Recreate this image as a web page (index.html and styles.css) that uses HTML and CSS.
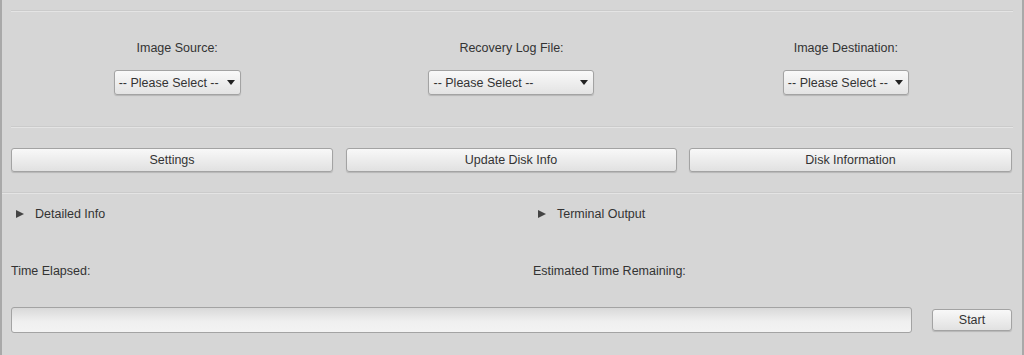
FILE: index.html
```html
<!DOCTYPE html>
<html>
<head>
<meta charset="utf-8">
<link rel="stylesheet" href="styles.css">
</head>
<body>
<div class="frame">
  <div class="rule inset"></div>
  <div class="selects">
    <div class="field">
      <div class="label">Image Source:</div>
      <div class="select w1"><span>-- Please Select --</span><i class="arrow"></i></div>
    </div>
    <div class="field">
      <div class="label">Recovery Log File:</div>
      <div class="select w2"><span>-- Please Select --</span><i class="arrow"></i></div>
    </div>
    <div class="field">
      <div class="label">Image Destination:</div>
      <div class="select w3"><span>-- Please Select --</span><i class="arrow"></i></div>
    </div>
  </div>
  <div class="rule inset r2"></div>
  <div class="buttons">
    <button class="btn">Settings</button>
    <button class="btn">Update Disk Info</button>
    <button class="btn">Disk Information</button>
  </div>
  <div class="rule full r3"></div>
  <div class="pair info">
    <div class="disclosure"><i class="tri"></i>Detailed Info</div>
    <div class="disclosure"><i class="tri"></i>Terminal Output</div>
  </div>
  <div class="pair times">
    <div class="text">Time Elapsed:</div>
    <div class="text">Estimated Time Remaining:</div>
  </div>
  <div class="progress-row">
    <div class="progress"></div>
    <button class="btn start">Start</button>
  </div>
</div>
</body>
</html>
```

FILE: styles.css
```css
html, body {
  margin: 0;
  padding: 0;
  background: #d6d6d6;
}
body {
  font-family: "Liberation Sans", Arial, sans-serif;
  font-size: 12.5px;
  color: #333;
}
.frame {
  box-sizing: border-box;
  width: 1024px;
  height: 355px;
  border-left: 2px solid #a9a9a9;
  border-right: 2px solid #a9a9a9;
  padding-top: 10px;
  overflow: hidden;
}
.rule {
  height: 0;
  border-top: 1px solid #cbcbcb;
  border-bottom: 1px solid #e4e4e4;
}
.rule.inset {
  margin: 0 9px 0 9px;
}
.rule.r2 {
  margin-top: 31px;
}
.rule.full {
  margin: 20px 0 0 0;
}
.selects {
  display: grid;
  grid-template-columns: 1fr 1fr 1fr;
  margin: 29px 9px 0 8px;
}
.field {
  display: flex;
  flex-direction: column;
  align-items: center;
}
.label {
  line-height: 15px;
  height: 15px;
}
.select {
  box-sizing: border-box;
  margin-top: 14px;
  height: 25px;
  display: flex;
  align-items: center;
  justify-content: space-between;
  padding: 0 5px 0 4px;
  border: 1px solid #a3a3a3;
  border-radius: 3px;
  background: linear-gradient(#f9f9f9, #e3e3e3);
  box-shadow: 0 1px 1px rgba(0,0,0,0.15);
  color: #333;
}
.select.w1 { width: 127px; }
.select.w2 { width: 166px; }
.select.w3 { width: 126px; }
.arrow {
  width: 0;
  height: 0;
  border-left: 4px solid transparent;
  border-right: 4px solid transparent;
  border-top: 5px solid #222;
}
.buttons {
  display: grid;
  grid-template-columns: 322px 331px 1fr;
  column-gap: 12.5px;
  margin: 20px 10px 0 9px;
}
.btn {
  box-sizing: border-box;
  height: 24px;
  font-family: "Liberation Sans", Arial, sans-serif;
  font-size: 12.5px;
  color: #333;
  border: 1px solid #a3a3a3;
  border-radius: 3px;
  background: linear-gradient(#f8f8f8, #e1e1e1);
  box-shadow: 0 1px 1px rgba(0,0,0,0.15);
  padding: 0;
}
.pair {
  display: grid;
  grid-template-columns: 522px 1fr;
  padding-left: 9px;
  line-height: 16px;
}
.info {
  margin-top: 12px;
}
.times {
  margin-top: 41px;
}
.disclosure {
  display: flex;
  align-items: center;
  padding-left: 5px;
}
.tri {
  width: 0;
  height: 0;
  border-top: 4.5px solid transparent;
  border-bottom: 4.5px solid transparent;
  border-left: 8px solid #444;
  margin-right: 11px;
}
.progress-row {
  display: flex;
  align-items: center;
  margin: 28px 10px 0 9px;
}
.progress {
  box-sizing: border-box;
  width: 901px;
  height: 26px;
  border: 1px solid #a3a3a3;
  border-radius: 3px;
  background: linear-gradient(#d9d9d9, #efefef 55%, #f3f3f3);
}
.btn.start {
  width: 80px;
  height: 22px;
  margin-left: auto;
}
```
